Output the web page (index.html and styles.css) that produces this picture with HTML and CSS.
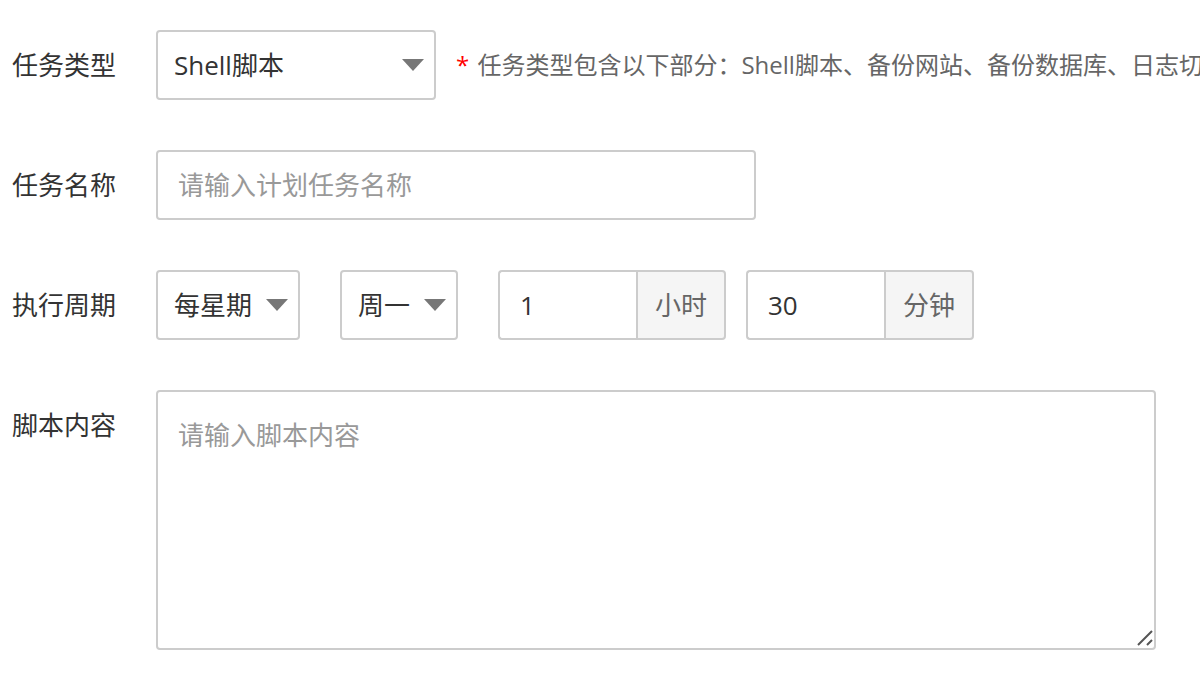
FILE: index.html
```html
<!DOCTYPE html>
<html lang="zh-CN">
	<head>
		<meta charset="UTF-8" />
		<meta name="viewport" content="width=device-width, initial-scale=1.0" />
		<title>添加计划任务</title>
		<link rel="stylesheet" href="styles.css">
	</head>
	<body>
		<form class="task-form">
			<div class="form-row">
				<label class="form-label">任务类型</label>
				<span class="select-wrap select-type">
					<select class="form-select">
						<option>Shell脚本</option>
						<option>备份网站</option>
						<option>备份数据库</option>
						<option>日志切割</option>
					</select>
					<svg class="select-arrow" width="22" height="12" viewBox="0 0 22 12"><path d="M0 0H22L11 12Z" fill="#777"/></svg>
				</span>
				<span class="form-hint"><em>*</em> 任务类型包含以下部分：Shell脚本、备份网站、备份数据库、日志切割</span>
			</div>

			<div class="form-row">
				<label class="form-label">任务名称</label>
				<input class="form-input input-name" type="text" placeholder="请输入计划任务名称">
			</div>

			<div class="form-row">
				<label class="form-label">执行周期</label>
				<span class="select-wrap select-cycle">
					<select class="form-select">
						<option>每星期</option>
						<option>每天</option>
						<option>每月</option>
					</select>
					<svg class="select-arrow" width="22" height="12" viewBox="0 0 22 12"><path d="M0 0H22L11 12Z" fill="#777"/></svg>
				</span>
				<span class="select-wrap select-week">
					<select class="form-select">
						<option>周一</option>
						<option>周二</option>
						<option>周三</option>
					</select>
					<svg class="select-arrow" width="22" height="12" viewBox="0 0 22 12"><path d="M0 0H22L11 12Z" fill="#777"/></svg>
				</span>
				<div class="input-group group-hour">
					<input class="group-input" type="number" value="1">
					<span class="group-addon">小时</span>
				</div>
				<div class="input-group group-minute">
					<input class="group-input" type="number" value="30">
					<span class="group-addon">分钟</span>
				</div>
			</div>

			<div class="form-row">
				<label class="form-label">脚本内容</label>
				<span class="textarea-wrap">
					<textarea class="form-textarea" placeholder="请输入脚本内容"></textarea>
					<svg class="resize-grip" width="18" height="18" viewBox="0 0 18 18"><path d="M3 16L17 2M12 16L17 11" stroke="#555" stroke-width="2"/></svg>
				</span>
			</div>
		</form>
	</body>
</html>
```
FILE: styles.css
```css
html,
body {
	margin: 0;
	background-color: #fff;
	overflow: hidden;
}
body {
	font-family: "Open Sans", "Noto Sans CJK SC", sans-serif;
	font-size: 26px;
	color: #333;
}
.task-form {
	padding: 30px 0 0 12px;
}
.form-row {
	display: flex;
	align-items: flex-start;
	margin-bottom: 50px;
	white-space: nowrap;
}
.form-label {
	flex: none;
	width: 144px;
	line-height: 70px;
	height: 70px;
}

/* 下拉框 */
.select-wrap {
	position: relative;
	display: block;
	flex: none;
	height: 70px;
}
.form-select {
	-webkit-appearance: none;
	appearance: none;
	width: 100%;
	height: 70px;
	margin: 0;
	padding: 0 40px 0 16px;
	border: 2px solid #ccc;
	border-radius: 4px;
	background-color: #fff;
	font: inherit;
	color: #333;
	outline: none;
	box-sizing: border-box;
}
.select-arrow {
	position: absolute;
	right: 12px;
	top: 29px;
	pointer-events: none;
}
.select-type {
	width: 280px;
}
.select-cycle {
	width: 144px;
	margin-right: 40px;
}
.select-week {
	width: 118px;
	margin-right: 40px;
}

.form-hint {
	flex: 1;
	min-width: 0;
	overflow: hidden;
	margin-left: 20px;
	line-height: 70px;
	font-size: 24px;
	color: #666;
}
.form-hint em {
	font-style: normal;
	color: #f00;
	margin-right: 2px;
}

/* 输入框 */
.form-input,
.group-input,
.form-textarea {
	margin: 0;
	border: 2px solid #ccc;
	border-radius: 4px;
	padding: 0 20px;
	font: inherit;
	color: #333;
	outline: none;
	box-sizing: border-box;
}
.form-input::placeholder,
.form-textarea::placeholder {
	color: #999;
}
.input-name {
	width: 600px;
	height: 70px;
}

.input-group {
	display: flex;
	flex: none;
	height: 70px;
}
.group-hour {
	margin-right: 20px;
}
.group-input {
	width: 138px;
	height: 70px;
	border-right: none;
	border-radius: 4px 0 0 4px;
	-moz-appearance: textfield;
}
.group-input::-webkit-inner-spin-button,
.group-input::-webkit-outer-spin-button {
	-webkit-appearance: none;
	margin: 0;
}
.group-addon {
	width: 90px;
	height: 70px;
	line-height: 66px;
	text-align: center;
	border: 2px solid #ccc;
	border-radius: 0 4px 4px 0;
	background-color: #f5f5f5;
	color: #666;
	box-sizing: border-box;
}

/* 文本域 */
.textarea-wrap {
	position: relative;
	display: block;
	flex: none;
}
.form-textarea {
	display: block;
	width: 1000px;
	height: 260px;
	padding: 25px 20px 20px;
	line-height: 1.4;
	resize: none;
}
.resize-grip {
	position: absolute;
	right: 3px;
	bottom: 3px;
	pointer-events: none;
}
```
